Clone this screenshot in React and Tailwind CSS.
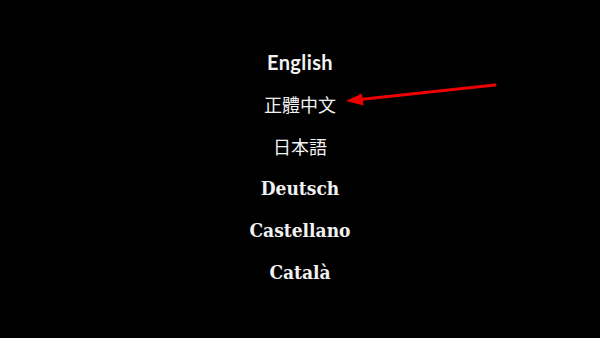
import React from "react";

const serif = "font-['DejaVu_Serif_Condensed','DejaVu_Serif',serif] [font-stretch:condensed] font-bold text-[19px]";

const items = [
  { label: "English", font: "font-['Lato',sans-serif] font-bold text-[20px] tracking-[0.4px]" },
  { label: "正體中文", font: "font-['Noto_Sans_CJK_TC',sans-serif] font-normal text-[18px]" },
  { label: "日本語", font: "font-['Noto_Sans_CJK_JP',sans-serif] font-normal text-[18px]" },
  { label: "Deutsch", font: serif },
  { label: "Castellano", font: serif },
  { label: "Català", font: serif },
];

export default function App() {
  return (
    <div className="relative flex h-[338px] w-[600px] items-center justify-center overflow-hidden bg-black">
      <ul className="flex flex-col items-center gap-[18px] pb-[4px]">
        {items.map((it) => (
          <li
            key={it.label}
            className={`h-[24px] leading-[24px] text-[#f2f2f2] ${it.font}`}
          >
            {it.label}
          </li>
        ))}
      </ul>
      <svg
        className="pointer-events-none absolute left-0 top-0"
        width="600"
        height="338"
        viewBox="0 0 600 338"
      >
        <line x1="495" y1="85" x2="360" y2="99.5" stroke="#ee0000" strokeWidth="3" strokeLinecap="round" />
        <polygon points="346,101 362,93.5 363.5,105.5" fill="#ee0000" />
      </svg>
    </div>
  );
}
